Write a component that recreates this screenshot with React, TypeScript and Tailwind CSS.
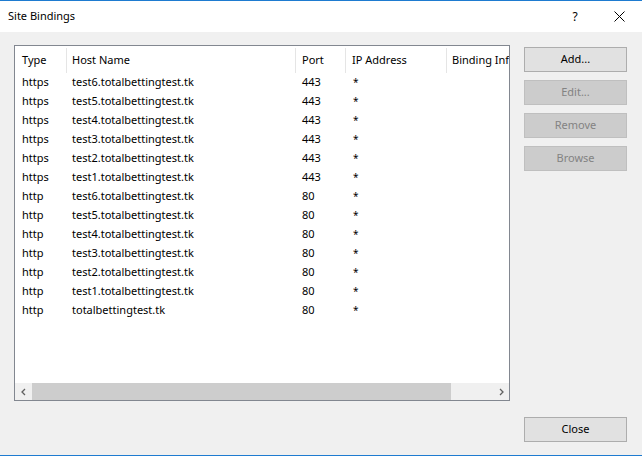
import React from "react";

const rows: [string, string, string][] = [
  ["https", "test6.totalbettingtest.tk", "443"],
  ["https", "test5.totalbettingtest.tk", "443"],
  ["https", "test4.totalbettingtest.tk", "443"],
  ["https", "test3.totalbettingtest.tk", "443"],
  ["https", "test2.totalbettingtest.tk", "443"],
  ["https", "test1.totalbettingtest.tk", "443"],
  ["http", "test6.totalbettingtest.tk", "80"],
  ["http", "test5.totalbettingtest.tk", "80"],
  ["http", "test4.totalbettingtest.tk", "80"],
  ["http", "test3.totalbettingtest.tk", "80"],
  ["http", "test2.totalbettingtest.tk", "80"],
  ["http", "test1.totalbettingtest.tk", "80"],
  ["http", "totalbettingtest.tk", "80"],
];

function Btn({ label, disabled }: { label: string; disabled?: boolean }) {
  return (
    <div
      className={
        "w-[103px] h-[25px] flex items-center justify-center border text-[11px] " +
        (disabled
          ? "bg-[#cccccc] border-[#bfbfbf] text-[#838383]"
          : "bg-[#e1e1e1] border-[#adadad] text-black")
      }
    >
      {label}
    </div>
  );
}

export default function App() {
  return (
    <div
      className="w-[642px] h-[456px] flex flex-col bg-[#f0f0f0] border-t border-b border-[#1e7bd0] text-black"
      style={{ fontFamily: '"Noto Sans", "Open Sans", sans-serif' }}
    >
      <div className="h-[31px] bg-white flex items-center pl-[8px] text-[11px]">
        <span className="flex-1 pb-[1px]">Site Bindings</span>
        <span className="w-[12px] text-center mr-[33px] text-[12px]">?</span>
        <svg width="11" height="11" viewBox="0 0 11 11" className="mr-[17px]">
          <path d="M0.5 0.5 L10.5 10.5 M10.5 0.5 L0.5 10.5" stroke="#000" strokeWidth="1" />
        </svg>
      </div>
      <div className="flex-1 flex flex-col px-[14px] pt-[13px] pb-[13px]">
        <div className="flex gap-[14px]">
          <div className="w-[496px] h-[356px] border border-[#828790] bg-white flex flex-col text-[11px]">
            <div className="flex-1 overflow-hidden">
              <div className="flex h-[27px] pt-[2px]">
                <div className="w-[51px] pl-[7px] flex items-center">Type</div>
                <div className="w-[229px] border-l border-[#e5e5e5] pl-[5px] flex items-center">Host Name</div>
                <div className="w-[50px] border-l border-[#e5e5e5] pl-[6px] flex items-center">Port</div>
                <div className="w-[101px] border-l border-[#e5e5e5] pl-[6px] flex items-center">IP Address</div>
                <div className="w-[63px] border-l border-[#e5e5e5] pl-[5px] flex items-center whitespace-nowrap overflow-hidden">Binding Information</div>
              </div>
              {rows.map((r, i) => (
                <div key={i} className="flex h-[19px] items-center">
                  <div className="w-[51px] pl-[7px]">{r[0]}</div>
                  <div className="w-[229px] pl-[6px]">{r[1]}</div>
                  <div className="w-[50px] pl-[7px]">{r[2]}</div>
                  <div className="w-[101px] pl-[8px] text-[10px] leading-none self-start pt-[4px]">*</div>
                </div>
              ))}
            </div>
            <div className="h-[17px] flex items-stretch bg-[#f0f0f0]">
              <div className="w-[17px] flex items-center justify-center">
                <svg width="8" height="8" viewBox="0 0 8 8">
                  <path d="M5 1 L2 4 L5 7" stroke="#606060" strokeWidth="1.3" fill="none" />
                </svg>
              </div>
              <div className="w-[419px] bg-[#cdcdcd]"></div>
              <div className="flex-1"></div>
              <div className="w-[17px] flex items-center justify-center">
                <svg width="8" height="8" viewBox="0 0 8 8">
                  <path d="M3 1 L6 4 L3 7" stroke="#606060" strokeWidth="1.3" fill="none" />
                </svg>
              </div>
            </div>
          </div>
          <div className="flex flex-col gap-[8px] pt-[2px]">
            <Btn label="Add..." />
            <Btn label="Edit..." disabled />
            <Btn label="Remove" disabled />
            <Btn label="Browse" disabled />
          </div>
        </div>
        <div className="flex-1"></div>
        <div className="flex justify-end pr-[1px]">
          <Btn label="Close" />
        </div>
      </div>
    </div>
  );
}
